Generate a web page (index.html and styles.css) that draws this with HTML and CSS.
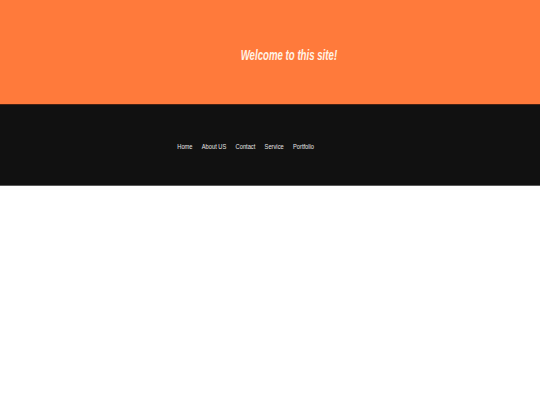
FILE: index.html
```html
<!DOCTYPE html>
<html>
<head>
<meta charset="utf-8">
<link rel="stylesheet" href="styles.css">
</head>
<body>
<header class="hero">
  <h1 class="hero-title">Welcome to this site!</h1>
</header>
<nav class="nav">
  <ul class="nav-list">
    <li><a href="#">Home</a></li>
    <li><a href="#">About US</a></li>
    <li><a href="#">Contact</a></li>
    <li><a href="#">Service</a></li>
    <li><a href="#">Portfolio</a></li>
  </ul>
</nav>
</body>
</html>
```
FILE: styles.css
```css
html, body {
  margin: 0;
  padding: 0;
  background: #ffffff;
  font-family: "Liberation Sans", Arial, sans-serif;
}
.hero {
  height: 104px;
  background: #ff7a3b;
  border-bottom: 1px solid #4a2212;
  display: flex;
  align-items: center;
  justify-content: center;
  padding-left: 38px;
}
.hero-title {
  margin: 0;
  color: #fff3e6;
  font-size: 14px;
  font-weight: bold;
  font-style: italic;
  padding-top: 6px;
  transform: scaleX(0.69);
}
.nav {
  height: 80px;
  background: #111111;
  border-bottom: 1px solid #5a5a5a;
  display: flex;
  align-items: center;
  justify-content: center;
  padding-right: 49px;
}
.nav-list {
  list-style: none;
  margin: 0;
  padding: 0 0 3px 0;
  display: flex;
  gap: 13px;
  transform: scaleX(0.715);
}
.nav-list a {
  color: #e6e6e6;
  text-decoration: none;
  font-size: 8px;
}
```
